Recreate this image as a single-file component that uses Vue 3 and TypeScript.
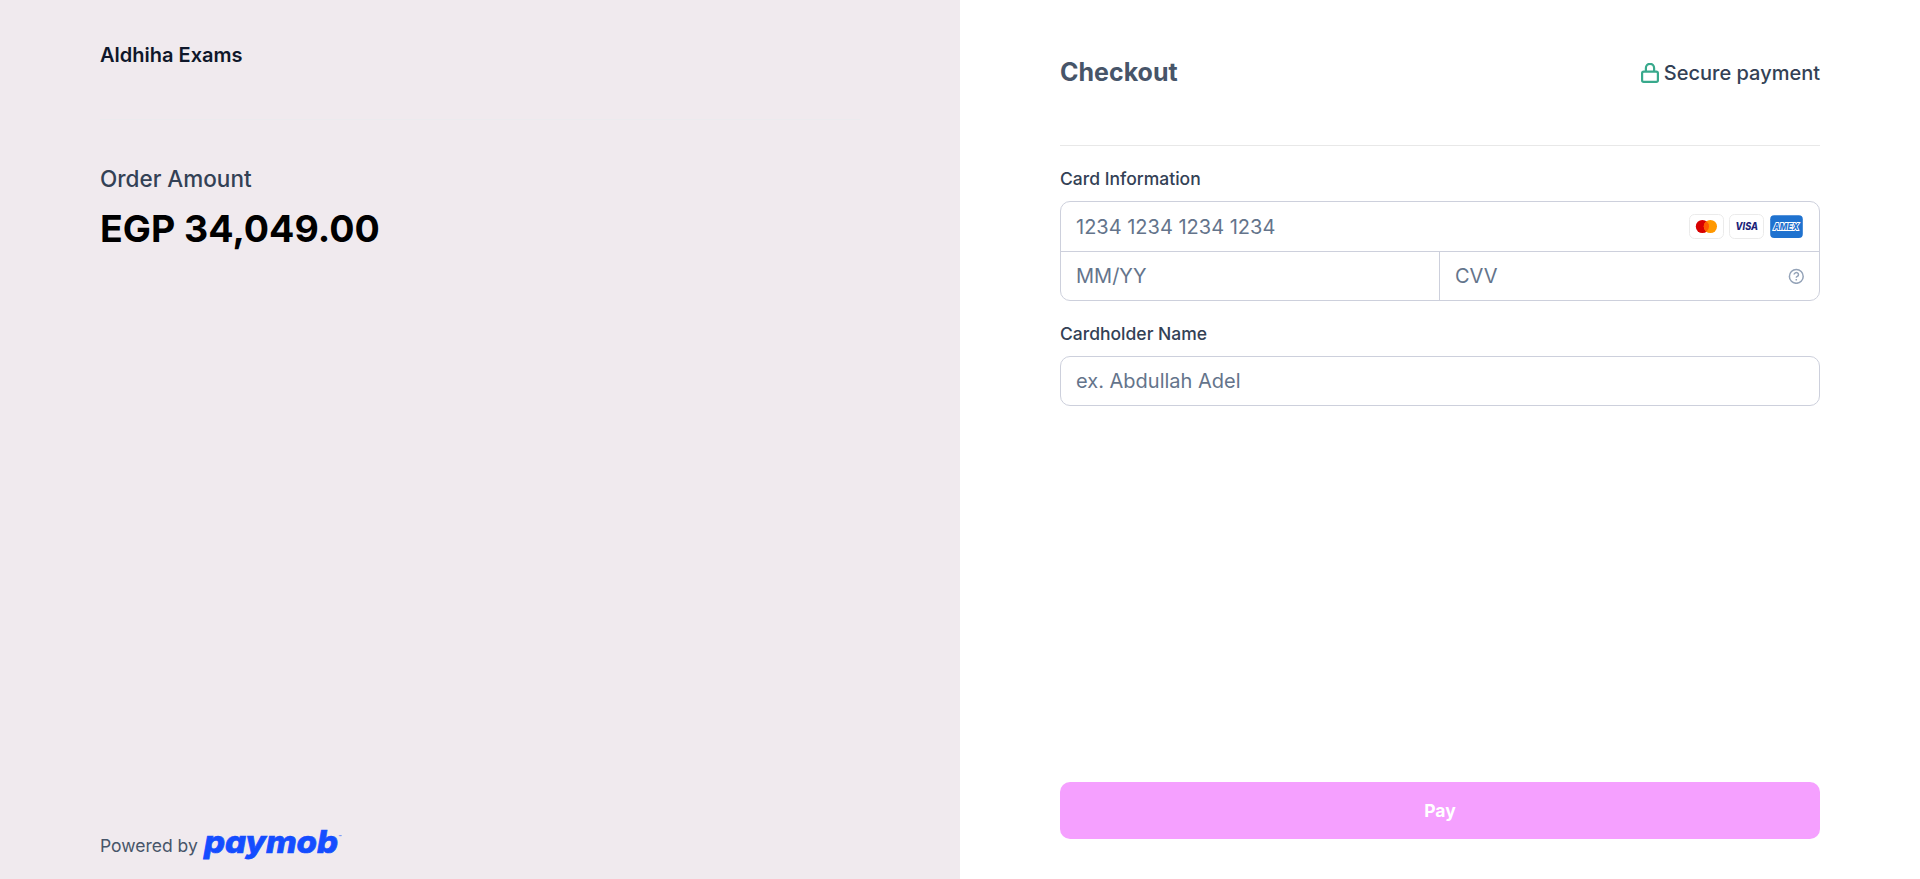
<script setup lang="ts">
import { ref } from 'vue'

const cardNumber = ref('')
const expiry = ref('')
const cvv = ref('')
const holder = ref('')
</script>

<template>
  <div class="page">
    <aside class="summary">
      <header class="merchant">Aldhiha Exams</header>
      <div class="order-label">Order Amount</div>
      <div class="order-amount">EGP 34,049.00</div>
      <footer class="powered">
        <span>Powered by</span>
        <svg class="logo" width="144" height="36" viewBox="0 0 144 36" role="img" aria-label="paymob">
          <text class="logo-text" x="1" y="26" textLength="134" lengthAdjust="spacingAndGlyphs">paymob</text>
          <text class="logo-mark" x="135.6" y="11.8">™</text>
        </svg>
      </footer>
    </aside>

    <main class="checkout">
      <header class="checkout-head">
        <h1>Checkout</h1>
        <div class="secure">
          <svg width="18" height="20" viewBox="0 0 18 20" fill="none" stroke="#38a98c" stroke-width="2.2">
            <rect x="1.1" y="8.6" width="15.8" height="10.3" rx="1.6" />
            <path d="M4.9 8.4V4.9a4.1 4.1 0 0 1 8.2 0v3.5" />
          </svg>
          <span>Secure payment</span>
        </div>
      </header>

      <label class="field-label">Card Information</label>
      <div class="card-box">
        <div class="row number-row">
          <input v-model="cardNumber" placeholder="1234 1234 1234 1234" />
          <div class="brands">
            <svg width="35" height="25" viewBox="0 0 35 25">
              <rect x=".5" y=".5" width="34" height="24" rx="5" fill="#fff" stroke="#ebebeb" />
              <circle cx="13.4" cy="12.5" r="6.6" fill="#d80000" />
              <circle cx="21.4" cy="12.5" r="6.6" fill="#ff9800" />
              <path d="M17.4 7.25a6.6 6.6 0 0 1 0 10.5a6.6 6.6 0 0 1 0-10.5" fill="#ff5a00" />
            </svg>
            <svg width="35" height="25" viewBox="0 0 35 25">
              <rect x=".5" y=".5" width="34" height="24" rx="5" fill="#fff" stroke="#ebebeb" />
              <text class="visa" x="6.6" y="16.2" textLength="22.4" lengthAdjust="spacingAndGlyphs">VISA</text>
            </svg>
            <svg width="35" height="25" viewBox="0 0 35 25">
              <rect x="1.2" y="1.2" width="32.6" height="22.8" rx="4" fill="#1f72cf" />
              <text class="amex" x="4.6" y="15.9" textLength="25" lengthAdjust="spacingAndGlyphs">AMEX</text>
            </svg>
          </div>
        </div>
        <div class="split">
          <div class="row expiry"><input v-model="expiry" placeholder="MM/YY" /></div>
          <div class="row cvv">
            <input v-model="cvv" placeholder="CVV" />
            <svg class="help" width="16" height="16" viewBox="0 0 16 16" fill="none" stroke="#94a3b8" stroke-width="1.5">
              <circle cx="8.3" cy="8.4" r="6.9" />
              <path d="M6.1 6.5a2.2 2 0 1 1 3.2 1.9c-.7.35-1 .65-1 1.25" />
              <path d="M8.3 11v1.5" />
            </svg>
          </div>
        </div>
      </div>

      <label class="field-label holder-label">Cardholder Name</label>
      <div class="holder-box">
        <input v-model="holder" placeholder="ex. Abdullah Adel" />
      </div>

      <button class="pay" type="button">Pay</button>
    </main>
  </div>
</template>

<style>
body {
  overflow: hidden;
}
</style>

<style scoped>
* {
  box-sizing: border-box;
}
.page {
  display: flex;
  height: 879px;
  font-family: Inter, "Liberation Sans", sans-serif;
  background: #fff;
}
.summary {
  width: 960px;
  padding: 0 100px;
  background: #f0eaee;
  display: flex;
  flex-direction: column;
}
.merchant {
  height: 120px;
  padding-top: 40px;
  border-bottom: 1px solid #ebebee;
  font-size: 20px;
  line-height: 30px;
  font-weight: 600;
  color: #0f172a;
}
.order-label {
  margin-top: 42px;
  font-size: 22.5px;
  line-height: 34px;
  font-weight: 500;
  color: #334155;
}
.order-amount {
  margin-top: 8px;
  font-size: 37.5px;
  line-height: 50px;
  font-weight: 700;
  color: #000;
}
.powered {
  margin-top: auto;
  margin-bottom: 16px;
  display: flex;
  align-items: center;
  gap: 5px;
  height: 36px;
  font-size: 17.5px;
  color: #475569;
}
.logo {
  display: block;
  overflow: visible;
}
.logo-text {
  font: italic 800 31px Inter, sans-serif;
  font-feature-settings: "cv11";
  fill: #144dff;
  stroke: #144dff;
  stroke-width: 0.7;
}
.logo-mark {
  font: 5px Inter, sans-serif;
  fill: #144dff;
}
.checkout {
  width: 960px;
  padding: 0 100px 40px;
  display: flex;
  flex-direction: column;
}
.checkout-head {
  flex: none;
  height: 146px;
  padding-top: 55px;
  border-bottom: 1px solid #e8e8e8;
  display: flex;
  justify-content: space-between;
  align-items: flex-start;
}
h1 {
  margin: 0;
  font-size: 25px;
  line-height: 34px;
  font-weight: 700;
  color: #475569;
}
.secure {
  display: flex;
  align-items: center;
  gap: 5px;
  height: 36px;
  font-size: 20px;
  font-weight: 500;
  color: #334155;
}
.field-label {
  display: block;
  margin-top: 20px;
  font-size: 17.5px;
  line-height: 26px;
  font-weight: 500;
  color: #334155;
}
.card-box,
.holder-box {
  border: 1px solid #cdd0dc;
  border-radius: 10px;
  overflow: hidden;
}
.card-box {
  margin-top: 9px;
  height: 100px;
}
.row {
  display: flex;
  align-items: center;
  flex: 1;
  min-width: 0;
  padding: 0 15px;
}
.number-row {
  height: 50px;
  border-bottom: 1px solid #cdd0dc;
}
.split {
  display: flex;
  height: 48px;
}
.expiry {
  flex: 0 0 378px;
}
.cvv {
  border-left: 1px solid #cdd0dc;
}
.help {
  flex: none;
}
.brands {
  display: flex;
  gap: 5px;
}
.visa {
  font: italic 800 10px Inter, sans-serif;
  fill: #1c1f78;
}
.amex {
  font: italic 800 9.5px Inter, sans-serif;
  fill: #1f72cf;
  stroke: #fff;
  stroke-width: 2;
  paint-order: stroke;
}
input {
  flex: 1;
  min-width: 0;
  width: 100%;
  height: 100%;
  padding: 0;
  border: 0;
  outline: 0;
  background: transparent;
  font: 400 20px Inter, sans-serif;
  color: #334155;
}
input::placeholder {
  color: #64748b;
  opacity: 1;
}
.holder-label {
  margin-top: 20px;
}
.holder-box {
  margin-top: 9px;
  height: 50px;
  padding: 0 15px;
}
.pay {
  margin-top: auto;
  flex: none;
  height: 57px;
  border: 0;
  border-radius: 10px;
  background: #f5a0ff;
  color: #fff;
  font: 700 17.5px Inter, sans-serif;
}
</style>
